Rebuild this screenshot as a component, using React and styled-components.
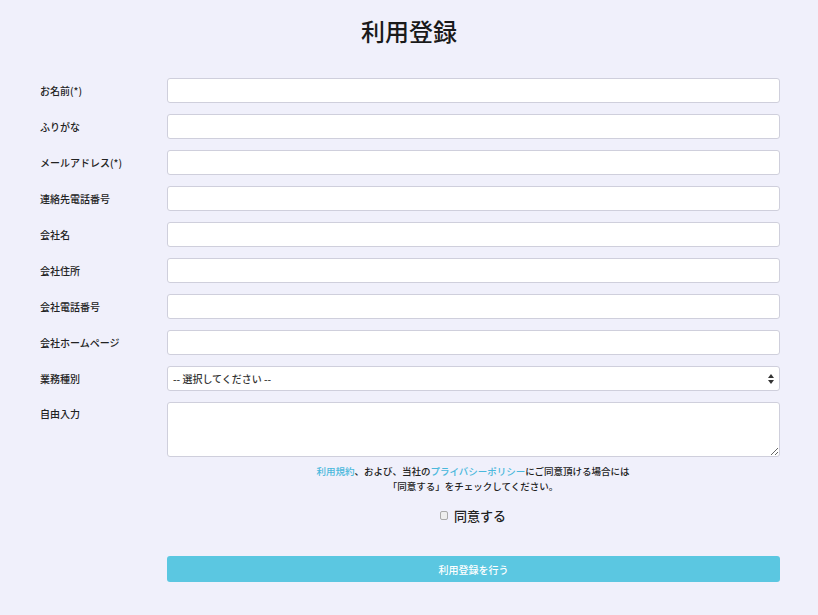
import React from "react";
import styled, { createGlobalStyle } from "styled-components";

const Global = createGlobalStyle`
  html, body { margin: 0; background: #f0f0fb; }
  body { font-family: "Noto Sans CJK JP", "Noto Sans", sans-serif; color: #222; }
`;

const Page = styled.div`
  width: 818px; height: 615px; box-sizing: border-box; padding-top: 14px;
`;
const Title = styled.h1`
  margin: 0 0 30px; text-align: center; font-size: 24px; font-weight: 500; line-height: 34px; color: #1a1a1a;
`;
const Form = styled.div`
  display: flex; flex-direction: column; gap: 11px; padding: 0 38px 0 40px;
`;
const Row = styled.div`
  display: grid; grid-template-columns: 127px 1fr; align-items: ${p => (p.top ? "start" : "center")};
`;
const Label = styled.label`
  font-size: 10px; font-weight: 500; color: #222; ${p => p.top && "padding-top: 4px;"}
`;
const Field = styled.input`
  height: 25px; box-sizing: border-box; border: 1px solid #cfcfdc; border-radius: 3px; background: #fff; width: 100%;
`;
const Select = styled.div`
  height: 25px; box-sizing: border-box; border: 1px solid #cfcfdc; border-radius: 3px; background: #fff;
  display: flex; align-items: center; justify-content: space-between; padding: 0 5px 0 5px; font-size: 10px; font-weight: 500; color: #333;
`;
const Area = styled.textarea`
  height: 55px; box-sizing: border-box; border: 1px solid #cfcfdc; border-radius: 3px; background: #fff; width: 100%; display: block;
`;
const Note = styled.p`
  margin: 7px 0 0 167px; width: 612px; text-align: center; font-size: 9.5px; font-weight: 500; line-height: 15px; color: #222;
`;
const Link = styled.a`
  color: #4ab8dc; text-decoration: none;
`;
const Agree = styled.div`
  margin: 12px 0 0 167px; width: 612px; display: flex; justify-content: center; align-items: center; gap: 6px; font-size: 13px; font-weight: 500;
`;
const Box = styled.span`
  width: 6px; height: 7px; border: 1px solid #aaa; border-radius: 2px; background: #eee;
`;
const Button = styled.button`
  margin: 31px 0 0 167px; width: 613px; height: 26px; border: none; border-radius: 3px; background: #5bc7e1;
  color: #fff; font-family: inherit; font-size: 10px; font-weight: 500;
`;

const labels = ["お名前(*)", "ふりがな", "メールアドレス(*)", "連絡先電話番号", "会社名", "会社住所", "会社電話番号", "会社ホームページ"];

export default function App() {
  return (
    <Page>
      <Global />
      <Title>利用登録</Title>
      <Form>
        {labels.map(l => (
          <Row key={l}><Label>{l}</Label><Field /></Row>
        ))}
        <Row>
          <Label>業務種別</Label>
          <Select>
            -- 選択してください --
            <svg width="6" height="10" viewBox="0 0 6 10"><path d="M0 4L3 0L6 4Z M0 6L3 10L6 6Z" fill="#333" /></svg>
          </Select>
        </Row>
        <Row top><Label top>自由入力</Label><Area /></Row>
      </Form>
      <Note>
        <Link>利用規約</Link>、および、当社の<Link>プライバシーポリシー</Link>にご同意頂ける場合には<br />
        「同意する」をチェックしてください。
      </Note>
      <Agree><Box />同意する</Agree>
      <Button>利用登録を行う</Button>
    </Page>
  );
}
